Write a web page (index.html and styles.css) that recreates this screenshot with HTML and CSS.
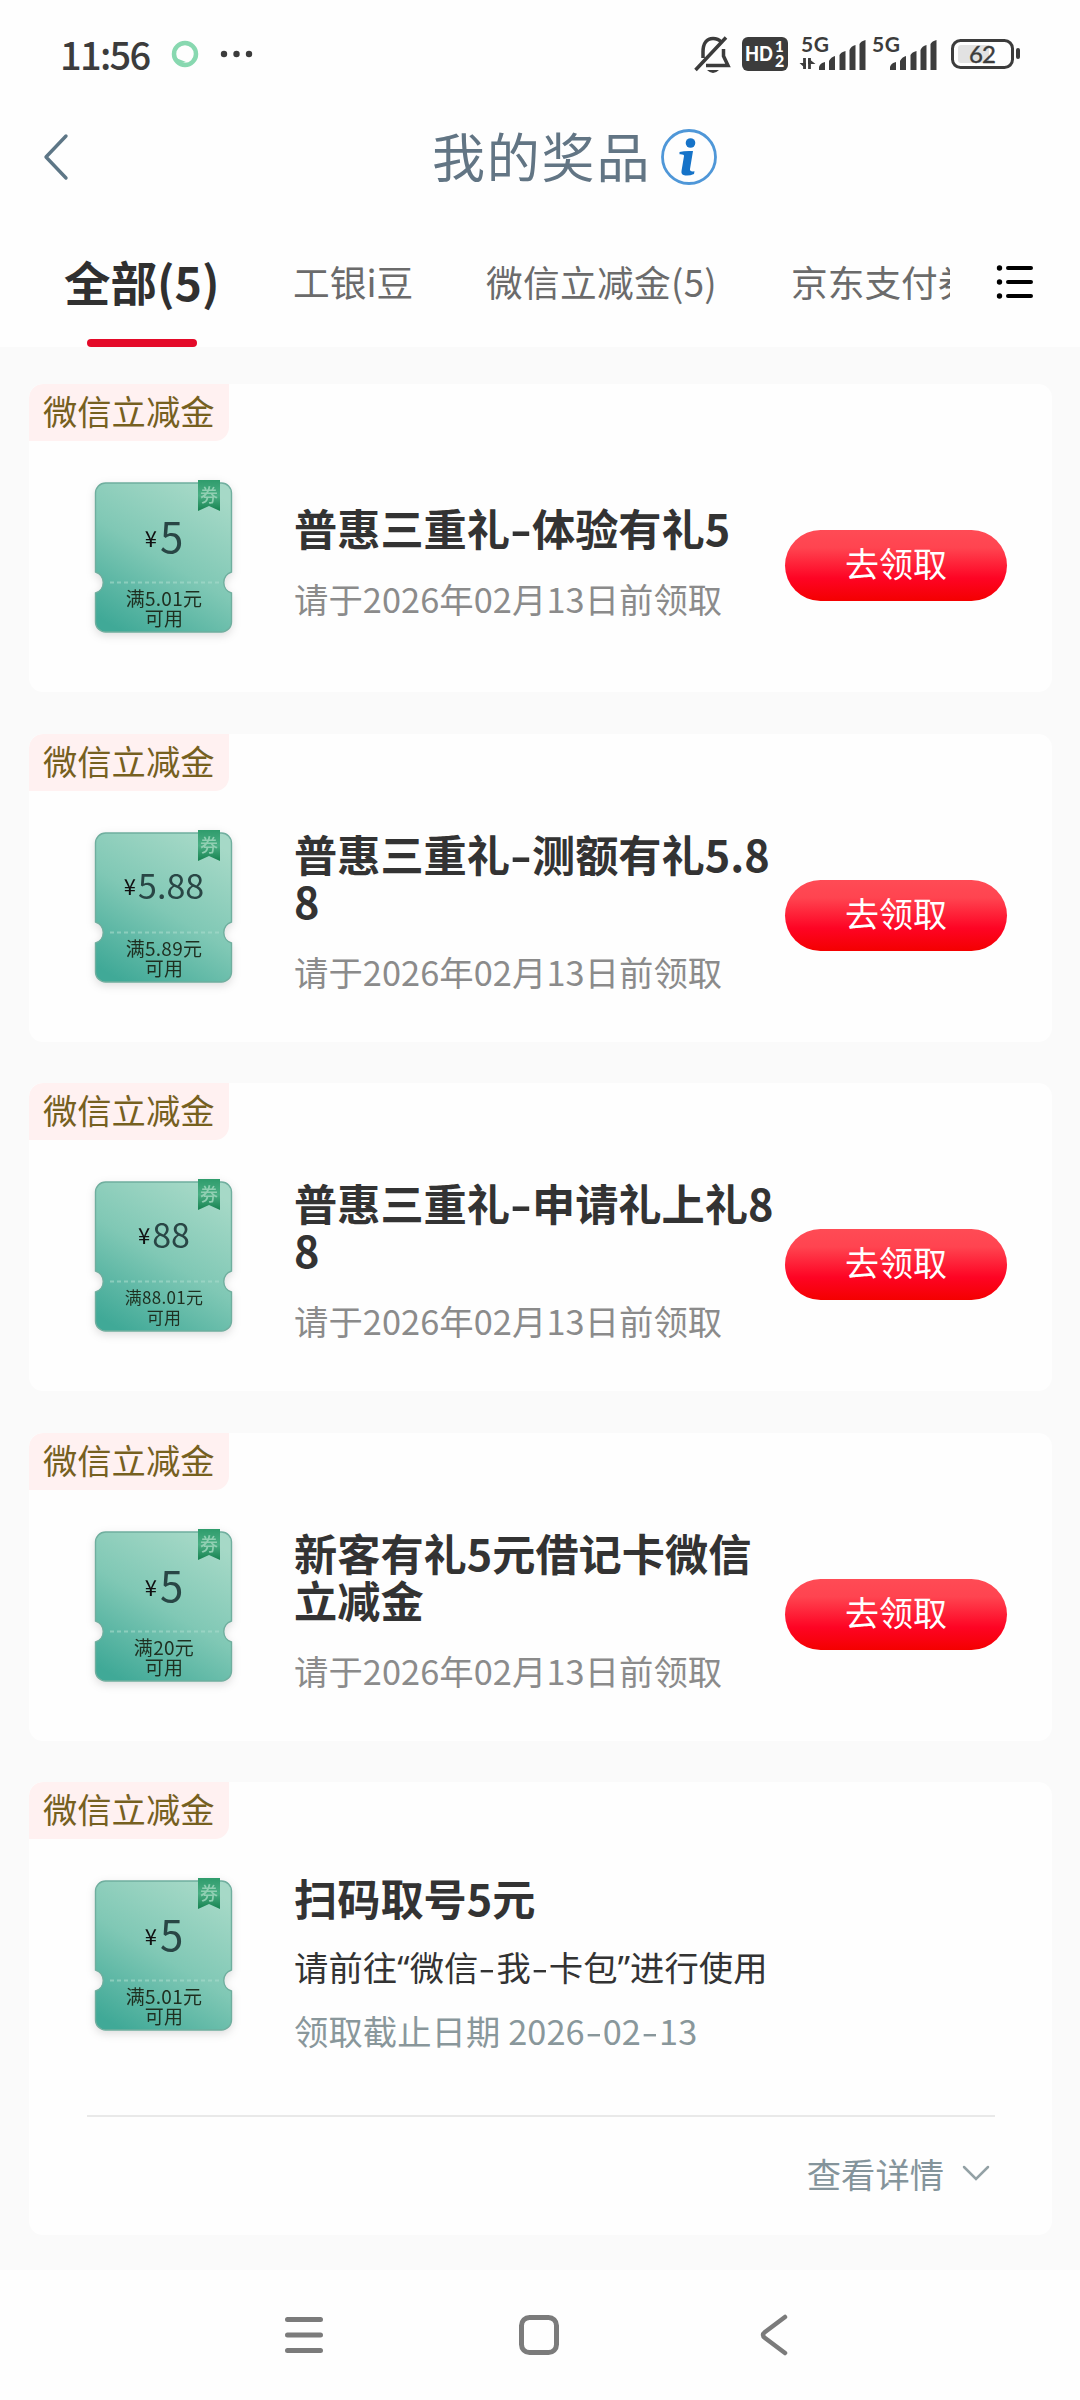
FILE: index.html
```html
<!DOCTYPE html>
<html lang="zh-CN">
<head>
<meta charset="utf-8">
<title>我的奖品</title>
<link rel="stylesheet" href="styles.css">
</head>
<body>
<svg width="0" height="0" class="defs">
  <defs>
    <linearGradient id="tg" x1="0.75" y1="0" x2="0.2" y2="1">
      <stop offset="0" stop-color="#a6d9c7"/><stop offset="0.5" stop-color="#80c8b5"/><stop offset="1" stop-color="#40a997"/>
    </linearGradient>
    <linearGradient id="rg" x1="0" y1="0" x2="0" y2="1">
      <stop offset="0" stop-color="#2f9c6c"/><stop offset="0.5" stop-color="#4aae83"/><stop offset="1" stop-color="#168250"/>
    </linearGradient>
    <symbol id="ticket" viewBox="0 0 158 174">
      <path d="M20 14H136a10 10 0 0 1 10 10V103a11 11 0 0 0 0 21V153a10 10 0 0 1-10 10H20a10 10 0 0 1-10-10V124a11 11 0 0 0 0-21V24a10 10 0 0 1 10-10Z" transform="translate(.5 0)" fill="url(#tg)" stroke="#6fae9e" stroke-width="1.400"/>
      <path d="M25 113.500H134" stroke="#a9dccd" stroke-width="2" stroke-dasharray="4 3" opacity=".6"/>
      <path d="M113 11H135V42L124 37L113 42Z" fill="url(#rg)"/>
    </symbol>
  </defs>
</svg>

<header class="status">
  <span class="time">11:56</span>
  <svg class="status-left" width="90" height="40" viewBox="165 34 90 40">
    <circle cx="185" cy="54" r="11" fill="none" stroke="#88d8b0" stroke-width="4.500"/>
    <path d="M176 58L178 64L186 62Z" fill="#88d8b0"/>
    <g fill="#3c3c3c"><circle cx="224" cy="54" r="3.200"/><circle cx="236.500" cy="54" r="3.200"/><circle cx="249" cy="54" r="3.200"/></g>
  </svg>
  <svg class="status-right" width="340" height="50" viewBox="690 30 340 50">
    <g fill="none" stroke="#3c3c3c" stroke-width="3.500">
      <path d="M703 58V52C703 43 707 38.500 713 38.500C717 38.500 719 39.500 721 42M723.500 49V56L728 65.500H706M695.500 70L726 37.500"/>
      <path d="M707 70H719Q713 76 707 70Z" fill="#3c3c3c" stroke="none"/>
    </g>
    <rect x="742" y="37" width="46" height="34" rx="6" fill="#3c3c3c"/>
    <g fill="#fff" font-family="Lato,sans-serif" font-weight="900"><text x="745" y="61" font-size="20" textLength="28" lengthAdjust="spacingAndGlyphs">HD</text><text x="775" y="52" font-size="15">1</text><text x="775" y="67" font-size="16">2</text></g>
    <g fill="#3c3c3c" font-family="Lato,sans-serif" font-weight="700" font-size="21"><text x="801" y="52" textLength="28">5G</text><text x="872" y="52" textLength="28">5G</text></g>
    <g id="bars" fill="#3c3c3c"><path d="M819 70V67Q820 63 825 62V70ZM829 70V61Q831 57 835 56V70ZM839.500 70V55Q841 52 845.500 51V70ZM849.500 70V50Q851 46 855.500 45V70ZM859.500 70V44Q861 41 865.500 40V70Z"/></g>
    <use href="#bars" x="71"/>
    <path d="M799.500 63H806V69ZM808 58L815.500 64H808Z" fill="#3c3c3c"/>
    <path d="M804.500 58V69M809.500 58V69" stroke="#3c3c3c" stroke-width="2.800"/>
    <rect x="952.500" y="40.500" width="60" height="27" rx="8" fill="none" stroke="#3c3c3c" stroke-width="3"/>
    <path d="M961 45H989V63H961Q958 63 958 60V48Q958 45 961 45Z" fill="#e2e2e2"/>
    <rect x="1016" y="48" width="4" height="11" rx="2" fill="#3c3c3c"/>
    <text x="969" y="63" font-family="Lato,sans-serif" font-size="24" fill="#3c3c3c" stroke="#3c3c3c" stroke-width=".4" textLength="27">62</text>
  </svg>
</header>

<div class="titlebar">
  <svg class="back" width="30" height="50" viewBox="0 0 30 50"><path d="M26 4L6 25L26 46" fill="none" stroke="#5d7686" stroke-width="3.400" stroke-linecap="round" stroke-linejoin="round"/></svg>
  <h1>我的奖品</h1>
  <svg class="info" width="58" height="58" viewBox="0 0 58 58"><circle cx="29" cy="29" r="26.500" fill="none" stroke="#4f97d8" stroke-width="2.800"/><circle cx="30.500" cy="15" r="4.800" fill="#1673c8"/><path d="M19.500 24Q25 22.500 33 23L30 41Q29.500 44 34.500 43.300L34 46Q28 48.500 23.500 47Q21 46 21.500 43L24 28Q24.300 26 19.500 26.300Z" fill="#1673c8"/></svg>
</div>

<nav class="tabs">
  <div class="tab-scroll">
    <span class="tab active">全部(5)</span>
    <span class="tab t2">工银i豆</span>
    <span class="tab t3">微信立减金(5)</span>
    <span class="tab t4">京东支付券</span>
  </div>
  <svg class="list" width="40" height="40" viewBox="0 0 40 40"><g fill="none" stroke="#000" stroke-width="4" stroke-linecap="round"><path d="M12 6H35M12 20H35M12 34H35"/></g><circle cx="3.500" cy="6" r="2.700"/><circle cx="3.500" cy="20" r="2.700"/><circle cx="3.500" cy="34" r="2.700"/></svg>
</nav>

<main class="cards">
  <section class="card">
    <span class="tag">微信立减金</span>
    <div class="row">
      <div class="ticket"><svg width="158" height="174"><use href="#ticket"/></svg><i class="quan">券</i><div class="amount"><small>¥</small>5</div><div class="cond">满5.01元<br>可用</div></div>
      <div class="info-col"><h2>普惠三重礼<b>-</b>体验有礼5</h2><p>请于2026年02月13日前领取</p></div>
      <a class="btn">去领取</a>
    </div>
  </section>
  <section class="card">
    <span class="tag">微信立减金</span>
    <div class="row">
      <div class="ticket"><svg width="158" height="174"><use href="#ticket"/></svg><i class="quan">券</i><div class="amount mid"><small>¥</small>5.88</div><div class="cond">满5.89元<br>可用</div></div>
      <div class="info-col"><h2>普惠三重礼<b>-</b>测额有礼5.8<br>8</h2><p>请于2026年02月13日前领取</p></div>
      <a class="btn">去领取</a>
    </div>
  </section>
  <section class="card">
    <span class="tag">微信立减金</span>
    <div class="row">
      <div class="ticket"><svg width="158" height="174"><use href="#ticket"/></svg><i class="quan">券</i><div class="amount mid"><small>¥</small>88</div><div class="cond tiny">满88.01元<br>可用</div></div>
      <div class="info-col"><h2>普惠三重礼<b>-</b>申请礼上礼8<br>8</h2><p>请于2026年02月13日前领取</p></div>
      <a class="btn">去领取</a>
    </div>
  </section>
  <section class="card">
    <span class="tag">微信立减金</span>
    <div class="row">
      <div class="ticket"><svg width="158" height="174"><use href="#ticket"/></svg><i class="quan">券</i><div class="amount"><small>¥</small>5</div><div class="cond">满20元<br>可用</div></div>
      <div class="info-col"><h2>新客有礼5元借记卡微信<br>立减金</h2><p>请于2026年02月13日前领取</p></div>
      <a class="btn">去领取</a>
    </div>
  </section>
  <section class="card last">
    <span class="tag">微信立减金</span>
    <div class="row">
      <div class="ticket"><svg width="158" height="174"><use href="#ticket"/></svg><i class="quan">券</i><div class="amount"><small>¥</small>5</div><div class="cond">满5.01元<br>可用</div></div>
      <div class="info-col"><h2>扫码取号5元</h2><p class="use">请前往<q>“</q>微信<b>-</b>我<b>-</b>卡包<q>”</q>进行使用</p><p class="due">领取截止日期 2026<b>-</b>02<b>-</b>13</p></div>
    </div>
    <div class="details"><span>查看详情</span><svg width="30" height="18" viewBox="0 0 30 18"><path d="M3 3L15 15L27 3" fill="none" stroke="#93a1a5" stroke-width="2.500" stroke-linecap="round"/></svg></div>
  </section>
</main>

<footer class="sysnav">
  <svg width="42" height="44" viewBox="0 0 42 44"><path d="M4.500 6.500H37.500M4.500 22H37.500M4.500 37.500H37.500" stroke="#7b7b7b" stroke-width="5" stroke-linecap="round"/></svg>
  <svg width="44" height="44" viewBox="0 0 44 44"><rect x="4.500" y="4.500" width="35" height="35" rx="8" fill="none" stroke="#7b7b7b" stroke-width="5"/></svg>
  <svg width="30" height="44" viewBox="0 0 30 44"><path d="M26 4L6 19Q2 22 6 25L26 40" fill="none" stroke="#7b7b7b" stroke-width="4.500" stroke-linecap="round"/></svg>
</footer>
</body>
</html>
```
FILE: styles.css
```css
* { box-sizing: border-box; margin: 0; padding: 0; }
body {
  width: 1080px;
  height: 2400px;
  overflow: hidden;
  background: #fefefe;
  color: #333;
  font-family: "Noto Sans CJK SC", sans-serif;
  display: flex;
  flex-direction: column;
}
.defs { position: absolute; }
svg { display: block; flex: none; }

.status { height: 108px; display: flex; align-items: center; padding-left: 60px; flex: none; }
.time { width: 105px; font: 500 38px/108px "Noto Sans CJK SC", sans-serif; letter-spacing: -1.700px; color: #3c3c3c; white-space: nowrap; }
.status-right { margin: 2px 50px 0 auto; }

.titlebar { height: 98px; display: flex; align-items: center; padding-left: 40px; flex: none; }
.titlebar h1 { margin: -5px 0 0 362px; width: 228px; font-size: 53px; line-height: 80px; letter-spacing: 1.800px; font-weight: 400; color: #627584; white-space: nowrap; }

.tabs { height: 141px; display: flex; flex: none; padding-left: 64px; }
.tab-scroll { width: 886px; display: flex; overflow: hidden; white-space: nowrap; font-size: 36.700px; line-height: 151px; color: #6b6b6b; font-weight: 400; }
.tab { flex: none; }
.active { position: relative; width: 229px; font-size: 46.500px; line-height: 149px; font-weight: 700; color: #303030; }
.active::after { content: ""; position: absolute; left: 23px; bottom: 0; width: 110px; height: 8px; border-radius: 4px; background: #e40a29; }
.t2 { width: 193px; }
.t3 { width: 305px; letter-spacing: .3px; }
.list { margin: 56px 0 0 46px; }

.cards { background: #fafafa; height: 1923px; padding: 37px 28px 0 29px; flex: none; }
.card { height: 308px; margin-bottom: 41.500px; border-radius: 14px; background: #fefefe; overflow: hidden; }
.tag { display: block; width: 200px; height: 57px; padding-left: 14px; border-radius: 14px 0 14px 0; background: #fff1f1; color: #76601f; font-size: 34.300px; line-height: 52px; white-space: nowrap; }
.row { display: flex; height: 251px; }
.ticket { position: relative; width: 158px; height: 174px; margin: 28px 0 0 56px; filter: drop-shadow(0 3px 4px rgba(0,0,0,.13)); flex: none; }
.ticket svg { position: absolute; inset: 0; }
.quan { position: absolute; left: 115px; top: 14px; font: 500 18px/22px "Noto Sans CJK SC", sans-serif; color: #90cfb2; }
.amount { position: absolute; inset: 40px 0 auto 0; text-align: center; font-size: 42px; line-height: 52px; color: #294645; white-space: nowrap; }
.amount small { font-size: 22px; color: #111; margin-right: 3px; vertical-align: 6px; line-height: 1; }
.amount.mid { font-size: 34px; }
.amount.mid small { vertical-align: 4px; margin-right: 2px; }
.cond { position: absolute; inset: 119px 0 auto 0; text-align: center; font-size: 19px; line-height: 20px; color: #1e2f20; white-space: nowrap; letter-spacing: .3px; }
.cond.tiny { font-size: 17px; }

.info-col { width: 490px; margin-left: 51px; height: 244px; display: flex; flex-direction: column; justify-content: center; flex: none; white-space: nowrap; }
h2 { font-size: 43.200px; line-height: 47px; font-weight: 700; color: #333; }
p { margin-top: 22px; font-size: 34.300px; line-height: 50px; letter-spacing: .1px; color: #8b8b8b; }
h2 b, p b { display: inline-block; font-weight: inherit; text-align: center; transform: scaleX(1.4); }
h2 b { width: 22px; }
p b { width: 18px; }
p q { font-family: "Noto Sans", sans-serif; quotes: none; }
.btn { display: block; width: 222px; height: 71px; margin: 89px 0 0 1px; border-radius: 36px; background: linear-gradient(#ff4b55, #ff4450 25%, #fe0424 68%, #f40000); color: #fff; text-align: center; font-size: 34px; line-height: 66px; flex: none; }

.last { height: 453px; }
.last .row { height: 276px; }
.last .info-col { height: 250px; }
p.use { margin-top: 20px; color: #333; }
p.due { margin-top: 12px; color: #89979b; }
.details { margin: 0 57px 0 58px; border-top: 2px solid #e9e9e9; height: 113px; display: flex; justify-content: flex-end; align-items: center; padding-right: 4px; color: #84949b; font-size: 34.300px; gap: 17px; }

.sysnav { height: 130px; flex: none; display: flex; align-items: center; padding-left: 283px; }
.sysnav svg + svg { margin-left: 192px; }
.sysnav svg:last-child { margin-left: 198px; }
```
